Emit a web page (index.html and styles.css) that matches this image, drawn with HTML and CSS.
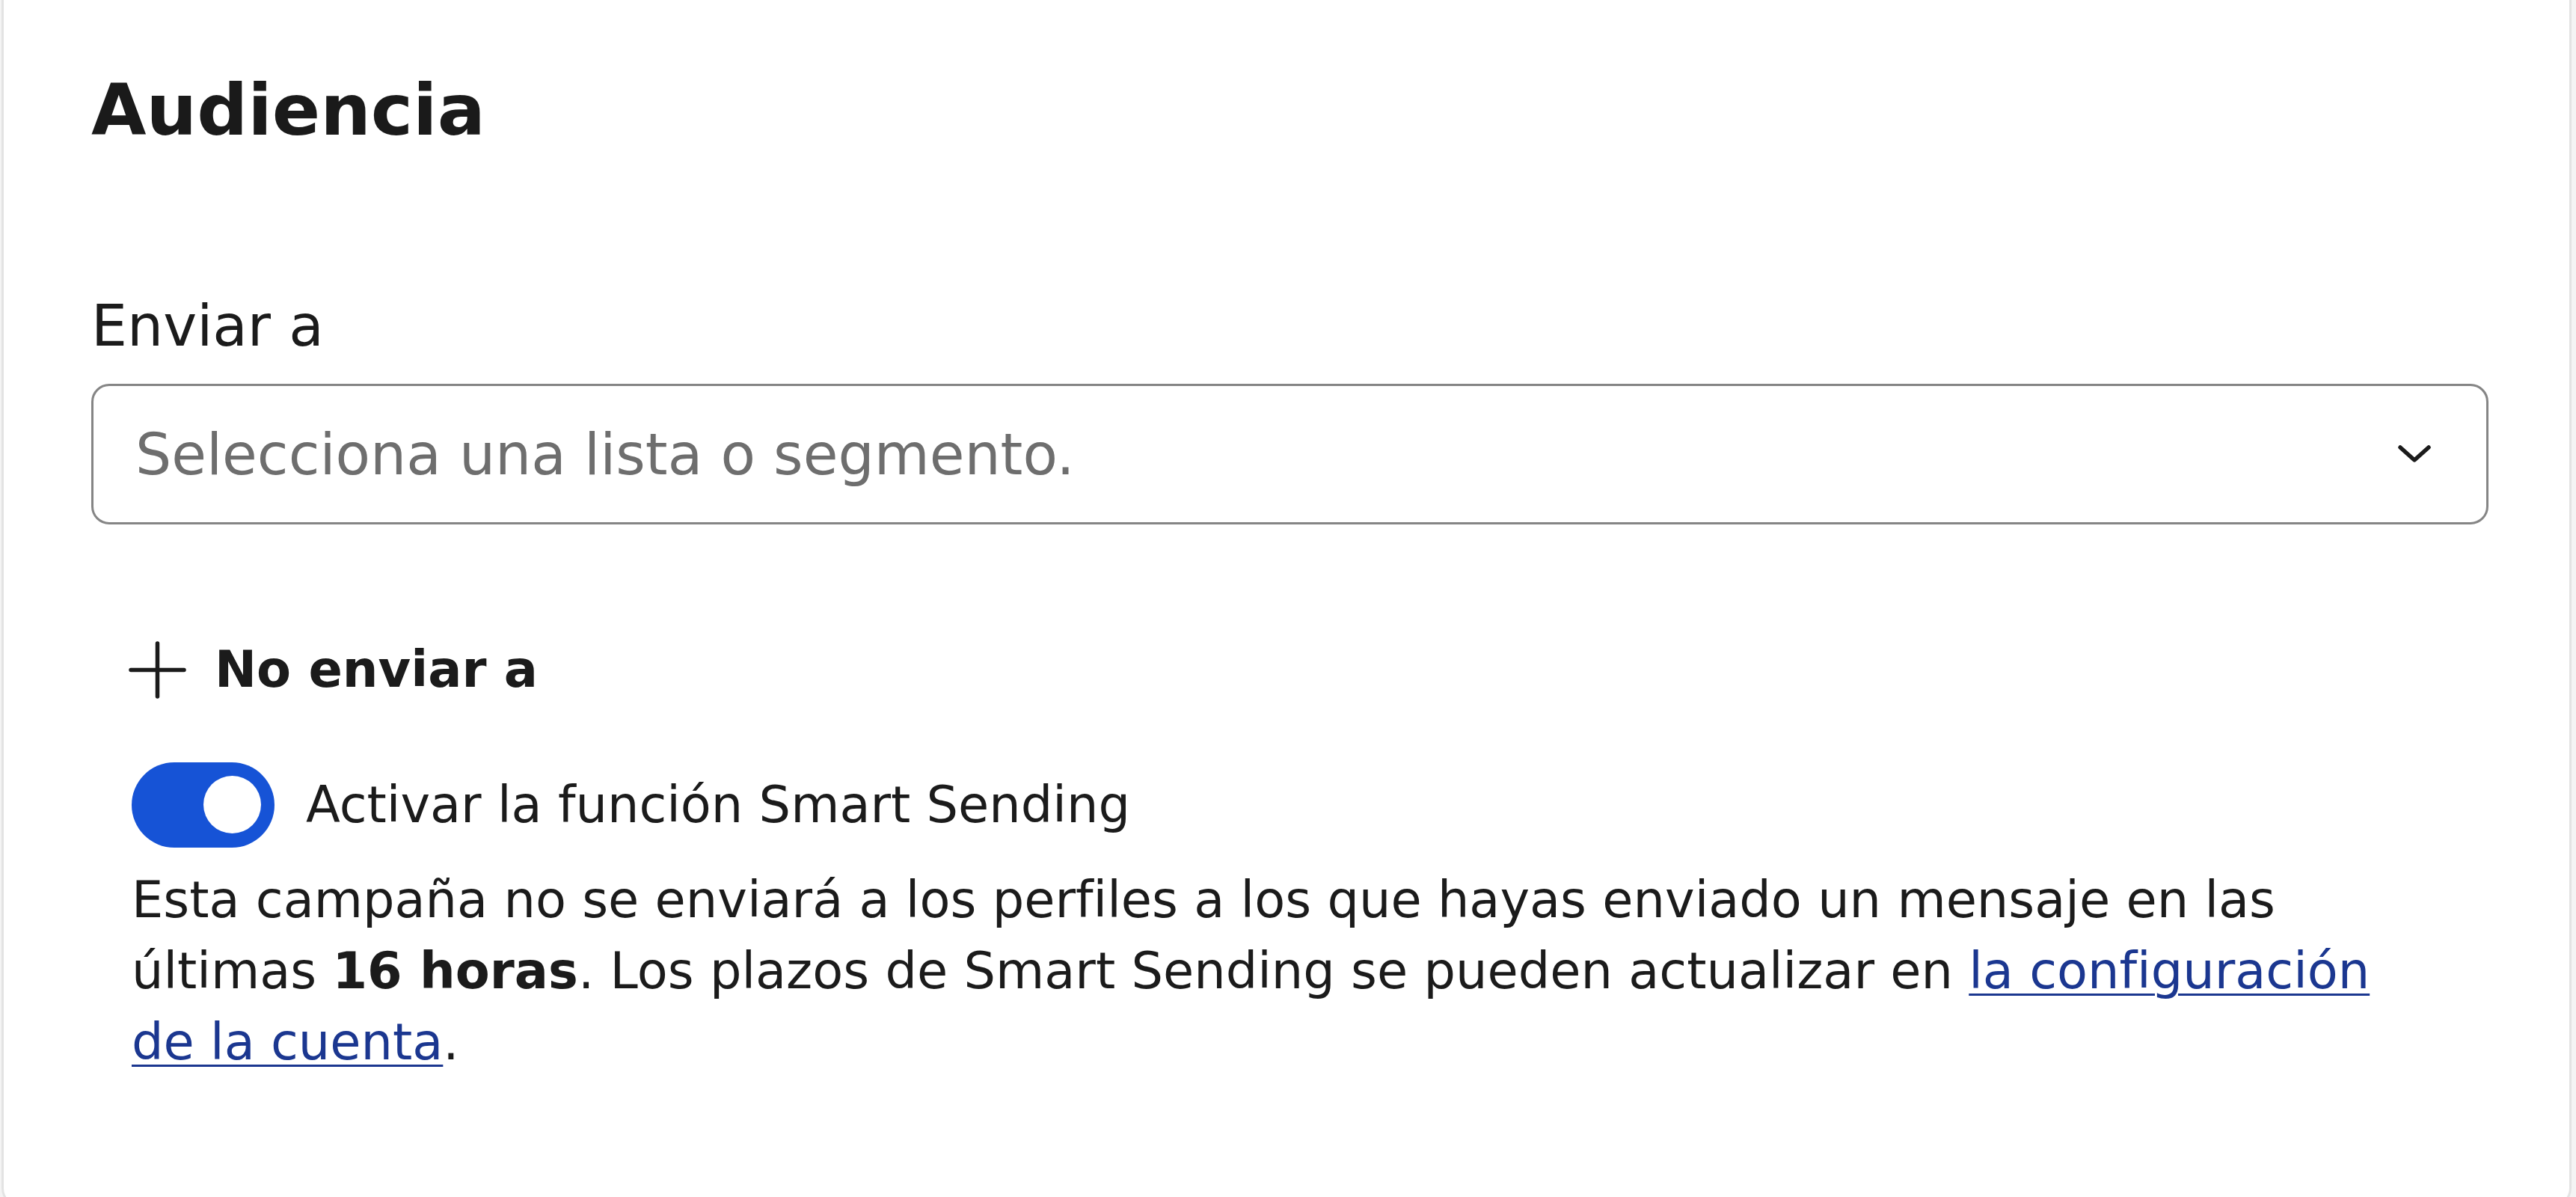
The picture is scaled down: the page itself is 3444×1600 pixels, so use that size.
FILE: index.html
```html
<!DOCTYPE html>
<html lang="es">

<head>
    <meta charset="UTF-8">
    <meta name="viewport" content="width=device-width, initial-scale=1.0">
    <title>Audiencia</title>
    <link rel="stylesheet" href="styles.css">
</head>

<body>
    <div class="card">
        <h2 class="card-title">Audiencia</h2>

        <label class="field-label" for="sendTo">Enviar a</label>
        <div class="select" id="sendTo" tabindex="0">
            <span class="select-placeholder">Selecciona una lista o segmento.</span>
            <svg class="chevron" width="44" height="24" viewBox="0 0 44 24">
                <path d="M3 3 L22 20 L41 3" fill="none" stroke="#1b1b1b" stroke-width="5.5" stroke-linecap="round" stroke-linejoin="round" />
            </svg>
        </div>

        <div class="options">
            <button class="add-exclude" type="button">
                <svg width="77" height="77" viewBox="0 0 77 77">
                    <path d="M38.5 3 V74 M3 38.5 H74" stroke="#1b1b1b" stroke-width="5.5" stroke-linecap="round" />
                </svg>
                <span>No enviar a</span>
            </button>

            <label class="switch-row">
                <span class="switch is-on"><span class="knob"></span></span>
                <span>Activar la función Smart Sending</span>
            </label>

            <p class="help">
                Esta campaña no se enviará a los perfiles a los que hayas enviado un mensaje en las
                últimas <strong>16 horas</strong>. Los plazos de Smart Sending se pueden actualizar en
                <a href="#">la configuración de la cuenta</a>.
            </p>
        </div>
    </div>
</body>

</html>
```

FILE: styles.css
```css
body {
    font-family: 'DejaVu Sans', 'Liberation Sans', sans-serif;
    margin: 0;
    padding: 0;
    background-color: #f4f4f4;
    color: #1b1b1b;
    overflow: hidden;
}

.card {
    background-color: #fff;
    margin: -24px 6px 0 2px;
    padding: 111px 108px 170px 117px;
    border: 3px solid #e3e3e3;
    border-radius: 26px;
}

.card-title {
    margin: 0 0 185px 0;
    font-size: 95px;
    line-height: 115px;
    font-weight: bold;
    color: #1a1a1a;
}

.field-label {
    display: block;
    margin-bottom: 32px;
    font-size: 76px;
    line-height: 91px;
}

.select {
    display: flex;
    align-items: center;
    justify-content: space-between;
    box-sizing: border-box;
    height: 188px;
    padding: 0 74px 0 56px;
    border: 3px solid #858585;
    border-radius: 24px;
    cursor: pointer;
}

.select-placeholder {
    font-size: 76px;
    line-height: 91px;
    color: #6e6e6e;
}

.chevron {
    display: block;
}

.options {
    margin-top: 154px;
    padding: 0 55px 0 54px;
}

.add-exclude {
    display: flex;
    align-items: center;
    gap: 38px;
    margin: 0 0 0 -4px;
    padding: 0;
    border: none;
    background: none;
    font-family: inherit;
    font-size: 67px;
    line-height: 80px;
    font-weight: bold;
    color: #1b1b1b;
    cursor: pointer;
}

.add-exclude svg {
    display: block;
}

.switch-row {
    display: flex;
    align-items: center;
    gap: 42px;
    margin-top: 84px;
    font-size: 67px;
    line-height: 80px;
}

.switch {
    position: relative;
    display: block;
    width: 191px;
    height: 114px;
    border-radius: 57px;
    background-color: #b5b5b5;
    flex-shrink: 0;
}

.switch.is-on {
    background-color: #1653d6;
}

.knob {
    position: absolute;
    top: 18px;
    left: 18px;
    width: 77px;
    height: 77px;
    border-radius: 50%;
    background-color: #fff;
}

.switch.is-on .knob {
    left: auto;
    right: 18px;
}

.help {
    margin: 23px 0 0 0;
    font-size: 67px;
    line-height: 95px;
}

.help strong {
    font-weight: bold;
}

.help a {
    color: #1b3790;
    text-decoration: underline;
    text-decoration-thickness: 3px;
    text-underline-offset: 7px;
}
```
